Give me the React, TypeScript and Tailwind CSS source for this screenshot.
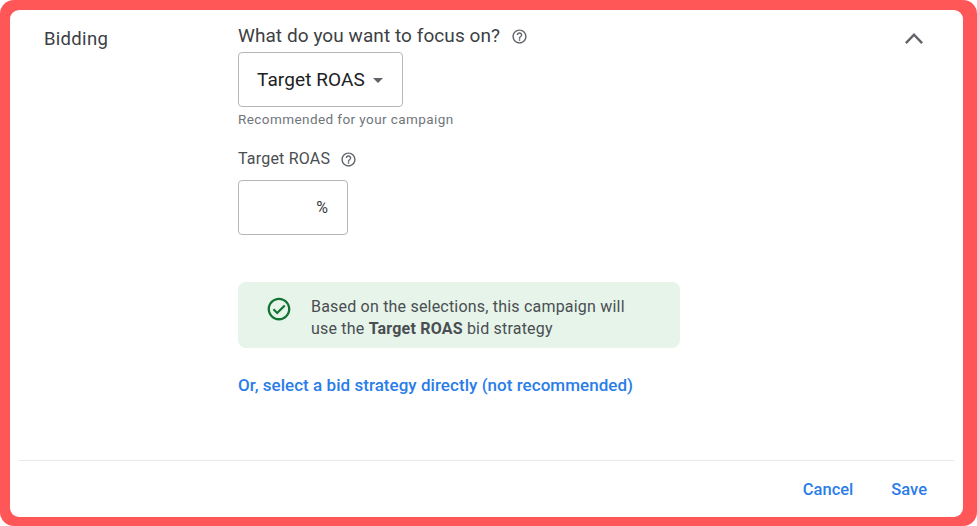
import React from "react";

const SANS = "font-['Roboto','Liberation_Sans',sans-serif]";

// Small "?" help icon next to field labels
function HelpIcon({ className }: { className?: string }) {
  return (
    <svg viewBox="0 0 24 24" className={className} fill="#5f6368">
      <path d="M11 18h2v-2h-2v2zm1-16C6.48 2 2 6.48 2 12s4.48 10 10 10 10-4.48 10-10S17.52 2 12 2zm0 18c-4.41 0-8-3.59-8-8s3.59-8 8-8 8 3.59 8 8-3.59 8-8 8zm0-14c-2.21 0-4 1.79-4 4h2c0-1.1.9-2 2-2s2 .9 2 2c0 2-3 1.75-3 5h2c0-2.25 3-2.5 3-5 0-2.21-1.79-4-4-4z" />
    </svg>
  );
}

export default function App() {
  return (
    <div className={`w-[977px] h-[526px] bg-white overflow-hidden ${SANS}`}>
      <div className="h-full rounded-[14px] bg-[#ff5757] pl-[10px] pr-[14px] pt-[10px] pb-[9px]">
        <div className="h-full rounded-[9px] bg-white flex flex-col px-[9px]">
          <div className="flex-1 flex items-start">
            <div className="w-[219px] pl-[25px] pt-[18px] text-[18.5px] leading-[22px] tracking-[0.3px] text-[#3c4043]">
              Bidding
            </div>

            <div className="flex-1 pt-[15px]">
              <div className="flex items-center gap-[11px] h-[22px]">
                <span className="text-[19px] leading-[22px] tracking-[0.07px] text-[#3c4043]">What do you want to focus on?</span>
                <HelpIcon className="w-[17px] h-[17px]" />
              </div>

              <div className="mt-[5px] w-[165px] h-[55px] rounded-[4px] border border-[#b3b6ba] flex items-center pl-[18px] gap-[8px] pt-[2px]">
                <span className="text-[19px] tracking-[0.1px] text-[#202124]">Target ROAS</span>
                <span className="w-0 h-0 border-x-[5px] border-x-transparent border-t-[5px] border-t-[#5f6368]" />
              </div>

              <div className="mt-[3px] text-[13.5px] leading-[18px] tracking-[0.42px] text-[#70757a]">
                Recommended for your campaign
              </div>

              <div className="mt-[21px] flex items-center gap-[10px] h-[20px]">
                <span className="text-[16px] leading-[20px] tracking-[0.2px] text-[#4a4e52]">Target ROAS</span>
                <HelpIcon className="w-[17px] h-[17px]" />
              </div>

              <div className="mt-[11px] w-[110px] h-[55px] rounded-[4px] border border-[#b3b6ba] flex items-center justify-end pr-[19px]">
                <span className="text-[16px] text-[#3c4043]">%</span>
              </div>

              <div className="mt-[47px] w-[442px] h-[66px] rounded-[8px] bg-[#e6f4ea] flex items-start pl-[28px] pt-[14px]">
                <svg viewBox="0 0 24 24" className="w-[26px] h-[26px] shrink-0" fill="#137333">
                  <path d="M12 1.5C6.2 1.5 1.5 6.2 1.5 12S6.2 22.5 12 22.5 22.5 17.8 22.5 12 17.8 1.5 12 1.5zm0 18.9c-4.64 0-8.4-3.76-8.4-8.4S7.36 3.6 12 3.6s8.4 3.76 8.4 8.4-3.76 8.4-8.4 8.4z" />
                  <path d="M10.3 14.3l-2.7-2.7-1.4 1.4 4.1 4.1 7.7-7.7-1.4-1.4z" />
                </svg>
                <div className="ml-[19px] text-[16px] leading-[22px] tracking-[0.2px] text-[#4a4e52]">
                  <div>Based on the selections, this campaign will</div>
                  <div>
                    use the <span className="font-bold">Target ROAS</span> bid strategy
                  </div>
                </div>
              </div>

              <button className="mt-[26px] block text-[17px] leading-[22px] tracking-[0.04px] font-medium text-[#2a7de9]">
                Or, select a bid strategy directly (not recommended)
              </button>
            </div>

            <svg viewBox="0 0 24 24" className="mt-[11px] mr-[22px] w-[36px] h-[36px]" fill="none" stroke="#5f6368" strokeWidth="1.6">
              <path d="M6.6 14.7L12 9.1l5.4 5.600" />
            </svg>
          </div>

          <div className="h-[57px] border-t border-[#e8eaed] flex items-center justify-end gap-[38px] pr-[27px] pt-[2px] text-[16.5px] font-medium text-[#2a7de9]">
            <button>Cancel</button>
            <button>Save</button>
          </div>
        </div>
      </div>
    </div>
  );
}
